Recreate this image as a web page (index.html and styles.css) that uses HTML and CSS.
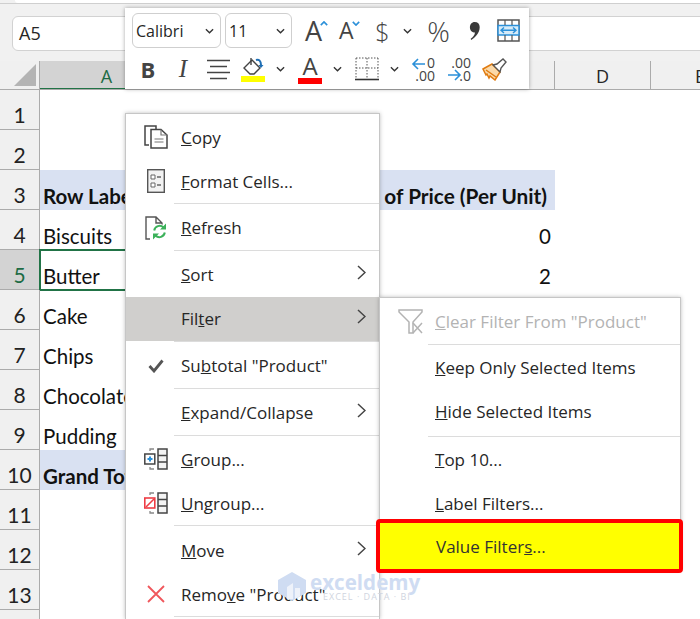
FILE: index.html
```html
<!DOCTYPE html>
<html lang="en">
<head>
    <meta charset="UTF-8">
    <title>Pivot table filter menu</title>
    <link rel="stylesheet" href="styles.css">
</head>
<body>
    <div class="app">
        <div class="top-strip"><div class="top-box"></div></div>
        <div class="formula-row">
            <div class="name-box">A5</div>
            <div class="formula-bar"></div>
        </div>

        <div class="col-headers">
            <div class="corner"><span class="corner-tri"></span></div>
            <div class="col-head col-a">A</div>
            <div class="col-head col-bc"></div>
            <div class="col-head col-d">D</div>
            <div class="col-head col-e">E</div>
        </div>

        <div class="row"><div class="row-num">1</div></div>
        <div class="row"><div class="row-num">2</div></div>
        <div class="row row-total">
            <div class="row-num">3</div>
            <div class="cell col-a bold">Row Labels</div>
            <div class="cell col-bc bold num">Sum of Price (Per Unit)</div>
        </div>
        <div class="row">
            <div class="row-num">4</div>
            <div class="cell col-a">Biscuits</div>
            <div class="cell col-bc num">0</div>
        </div>
        <div class="row">
            <div class="row-num row-num-on">5</div>
            <div class="cell col-a cell-on">Butter</div>
            <div class="cell col-bc num">2</div>
        </div>
        <div class="row"><div class="row-num">6</div><div class="cell col-a">Cake</div></div>
        <div class="row"><div class="row-num">7</div><div class="cell col-a">Chips</div></div>
        <div class="row"><div class="row-num">8</div><div class="cell col-a">Chocolate</div></div>
        <div class="row"><div class="row-num">9</div><div class="cell col-a">Pudding</div></div>
        <div class="row row-total">
            <div class="row-num">10</div>
            <div class="cell col-a bold">Grand Total</div>
            <div class="cell col-bc"></div>
        </div>
        <div class="row"><div class="row-num">11</div></div>
        <div class="row"><div class="row-num">12</div></div>
        <div class="row"><div class="row-num">13</div></div>
        <div class="row row-last"><div class="row-num"></div></div>
    </div>

    <!-- mini toolbar -->
    <div class="mini-bar">
        <div class="bar-row">
            <div class="combo combo-font"><span>Calibri</span><svg class="chev" viewBox="0 0 10 6"><path d="M1 1l4 4 4-4"/></svg></div>
            <div class="combo combo-size"><span>11</span><svg class="chev" viewBox="0 0 10 6"><path d="M1 1l4 4 4-4"/></svg></div>
            <div class="tool t-grow"><span class="big-a">A</span><svg class="caret" viewBox="0 0 10 6"><path d="M1 5l4-4 4 4"/></svg></div>
            <div class="tool t-shrink"><span class="small-a">A</span><svg class="caret caret-down" viewBox="0 0 10 6"><path d="M1 1l4 4 4-4"/></svg></div>
            <div class="tool t-dollar">$</div>
            <div class="tool t-chev"><svg class="chev" viewBox="0 0 10 6"><path d="M1 1l4 4 4-4"/></svg></div>
            <div class="tool t-pct">%</div>
            <div class="tool t-comma"><svg width="12" height="18" viewBox="0 0 13 23"><path d="M6 0c4 0 6.500 2.500 6.500 6.500C12.500 14 7 20 1.500 23L1 21.500c3-2 5-4.500 5.500-8C3 13.500 0 11 0 7c0-4 2.500-7 6-7z" fill="#3a3a3a"/></svg></div>
            <div class="tool t-wrap">
                <svg width="23" height="23" viewBox="0 0 23 23">
                    <rect x="1" y="1" width="21" height="21" fill="#fff" stroke="#555" stroke-width="1.500"/>
                    <rect x="1" y="6.500" width="21" height="9.500" fill="#d6ebf8" stroke="#2b90d9" stroke-width="1.500"/>
                    <path d="M8 1v5M15 1v5M8 16v6M15 16v6" stroke="#555" stroke-width="1.200"/>
                    <path d="M4 11.200h15M7 8.500l-3 2.700 3 2.700M16 8.500l3 2.700-3 2.700" fill="none" stroke="#2b90d9" stroke-width="1.400"/>
                </svg>
            </div>
        </div>
        <div class="bar-row bar-row-2">
            <div class="tool t-bold">B</div>
            <div class="tool t-ital">I</div>
            <div class="tool t-align">
                <svg width="23" height="21" viewBox="0 0 23 21"><path d="M0 1.500h23M3 7.500h17M0 13.500h23M3 19.500h17" stroke="#444" stroke-width="1.500"/></svg>
            </div>
            <div class="tool t-fill">
                <svg width="24" height="25" viewBox="0 0 24 25">
                    <path d="M3 11l8-8 8 8-6 6H9z" fill="#fff" stroke="#444" stroke-width="1.400"/>
                    <path d="M10 1v7" stroke="#444" stroke-width="1.400"/>
                    <path d="M15 3c3-1 5 1 5 5" fill="none" stroke="#1f6fb5" stroke-width="2"/>
                    <path d="M17.500 8h5l-2.500 3z" fill="#1f6fb5"/>
                    <rect y="19" width="24" height="6" fill="#ffff00"/>
                </svg>
            </div>
            <div class="tool t-chev2"><svg class="chev" viewBox="0 0 10 6"><path d="M1 1l4 4 4-4"/></svg></div>
            <div class="tool t-color"><span class="color-a">A</span><span class="color-bar"></span></div>
            <div class="tool t-chev2"><svg class="chev" viewBox="0 0 10 6"><path d="M1 1l4 4 4-4"/></svg></div>
            <div class="tool t-border">
                <svg width="24" height="24" viewBox="0 0 24 24">
                    <path d="M1 1h22M1 1v20M23 1v20M12 1v20M1 11h22" fill="none" stroke="#555" stroke-dasharray="1.500 1.500"/>
                    <path d="M0 22.500h24" stroke="#333" stroke-width="1.600"/>
                </svg>
            </div>
            <div class="tool t-chev2"><svg class="chev" viewBox="0 0 10 6"><path d="M1 1l4 4 4-4"/></svg></div>
            <div class="tool t-dec">
                <svg width="24" height="25" viewBox="0 0 24 25">
                    <path d="M14 7H2M7 2L2 7l5 5" fill="none" stroke="#2b90d9" stroke-width="1.600"/>
                    <text x="24" y="11" text-anchor="end" class="dec-text">0</text>
                    <text x="24" y="24" text-anchor="end" class="dec-text">.00</text>
                </svg>
            </div>
            <div class="tool t-dec">
                <svg width="24" height="25" viewBox="0 0 24 25">
                    <text x="24" y="11" text-anchor="end" class="dec-text">.00</text>
                    <path d="M1 18h12M8 13l5 5-5 5" fill="none" stroke="#2b90d9" stroke-width="1.600"/>
                    <text x="24" y="24" text-anchor="end" class="dec-text">.0</text>
                </svg>
            </div>
            <div class="tool t-brush">
                <svg width="25" height="23" viewBox="0 0 25 23">
                    <path d="M1 11l9-5 8 8-5 8-5-4-1 2-2-4-1 1z" fill="#fbd9a8" stroke="#e07b10" stroke-width="1.500"/>
                    <path d="M4 12l10 7" stroke="#e07b10" stroke-width="1.500"/>
                    <path d="M11 7l4-1 6-5 3 3-5 6-1 4z" fill="#fff" stroke="#555" stroke-width="1.400"/>
                </svg>
            </div>
        </div>
    </div>

    <!-- context menu -->
    <div class="menu">
        <div class="item">
            <span class="icon">
                <svg width="24" height="24" viewBox="0 0 24 24">
                    <path d="M5 20H1V1h11v3" fill="none" stroke="#444" stroke-width="1.500"/>
                    <path d="M7 4.500h10l6 5.500v13H7z" fill="#fff" stroke="#444" stroke-width="1.500"/>
                    <path d="M17 4.500V10h6M10.500 14h9M10.500 17h9" fill="none" stroke="#777" stroke-width="1.200"/>
                </svg>
            </span>
            <span class="label"><u>C</u>opy</span>
        </div>
        <div class="item">
            <span class="icon">
                <svg width="18" height="24" viewBox="0 0 18 24">
                    <rect x="0.700" y="0.700" width="16.600" height="22.600" fill="#f2f2f2" stroke="#555" stroke-width="1.400"/>
                    <path d="M4 6h4v4H4zM4 14h4v4H4z" fill="#fff" stroke="#666"/>
                    <path d="M10 8h4M10 16h4" stroke="#666" stroke-width="1.300"/>
                </svg>
            </span>
            <span class="label"><u>F</u>ormat Cells...</span>
        </div>
        <div class="sep"></div>
        <div class="item">
            <span class="icon">
                <svg width="22" height="24" viewBox="0 0 22 24">
                    <path d="M5 23H1V1h10l6 6v3M11 1v6h6" fill="none" stroke="#555" stroke-width="1.400"/>
                    <circle cx="14.500" cy="15.500" r="7.500" fill="#fff"/>
                    <path d="M9.200 14.500a5.500 5.500 0 0 1 9.300-3M19.800 16.500a5.500 5.500 0 0 1-9.300 3" fill="none" stroke="#3cb15a" stroke-width="2"/>
                    <path d="M21 7.500v6h-6zM8 23.500v-6h6z" fill="#3cb15a"/>
                </svg>
            </span>
            <span class="label"><u>R</u>efresh</span>
        </div>
        <div class="sep"></div>
        <div class="item">
            <span class="icon"></span>
            <span class="label"><u>S</u>ort</span>
            <svg class="more" viewBox="0 0 9 15"><path d="M1 1l7 6.500L1 14"/></svg>
        </div>
        <div class="item item-on">
            <span class="icon"></span>
            <span class="label">Fil<u>t</u>er</span>
            <svg class="more" viewBox="0 0 9 15"><path d="M1 1l7 6.500L1 14"/></svg>
        </div>
        <div class="sep"></div>
        <div class="item">
            <span class="icon">
                <svg width="16" height="14" viewBox="0 0 16 14"><path d="M1.500 7l4.500 5L14.500 1.500" fill="none" stroke="#555" stroke-width="2.800"/></svg>
            </span>
            <span class="label">Su<u>b</u>total "Product"</span>
        </div>
        <div class="sep"></div>
        <div class="item">
            <span class="icon"></span>
            <span class="label"><u>E</u>xpand/Collapse</span>
            <svg class="more" viewBox="0 0 9 15"><path d="M1 1l7 6.500L1 14"/></svg>
        </div>
        <div class="sep"></div>
        <div class="item">
            <span class="icon">
                <svg width="24" height="22" viewBox="0 0 24 22">
                    <rect x="0.800" y="6" width="10" height="10" fill="#fff" stroke="#444" stroke-width="1.500"/>
                    <path d="M3.500 11h5M6 8.500v5" stroke="#2b90d9" stroke-width="2"/>
                    <path d="M6 3V1h4M6 19v2h4" fill="none" stroke="#888" stroke-width="1.300"/>
                    <rect x="14" y="1" width="9" height="20" fill="#f4f4f4" stroke="#444" stroke-width="1.500"/>
                    <path d="M14 7.500h9M14 14h9" stroke="#444" stroke-width="1.300"/>
                </svg>
            </span>
            <span class="label"><u>G</u>roup...</span>
        </div>
        <div class="item">
            <span class="icon">
                <svg width="24" height="22" viewBox="0 0 24 22">
                    <rect x="0.800" y="6" width="10" height="10" fill="#fff" stroke="#ee3d45" stroke-width="1.600"/>
                    <path d="M2 15l8-8" stroke="#ee3d45" stroke-width="1.600"/>
                    <path d="M6 3V1h4M6 19v2h4" fill="none" stroke="#888" stroke-width="1.300"/>
                    <rect x="14" y="1" width="9" height="20" fill="#f4f4f4" stroke="#444" stroke-width="1.500"/>
                    <path d="M14 7.500h9M14 14h9" stroke="#444" stroke-width="1.300"/>
                </svg>
            </span>
            <span class="label"><u>U</u>ngroup...</span>
        </div>
        <div class="sep"></div>
        <div class="item">
            <span class="icon"></span>
            <span class="label"><u>M</u>ove</span>
            <svg class="more" viewBox="0 0 9 15"><path d="M1 1l7 6.500L1 14"/></svg>
        </div>
        <div class="item">
            <span class="icon">
                <svg width="18" height="18" viewBox="0 0 18 18"><path d="M1 1l16 16M17 1L1 17" stroke="#f0565b" stroke-width="1.800"/></svg>
            </span>
            <span class="label">Remo<u>v</u>e "Product"</span>
        </div>
        <div class="sep"></div>
    </div>

    <!-- filter submenu -->
    <div class="submenu">
        <div class="item sub-item disabled">
            <span class="icon">
                <svg width="25" height="25" viewBox="0 0 25 25">
                    <path d="M1 1h23v2l-9 10v11h-4V13L1 3z" fill="#fff" stroke="#b3b3b3" stroke-width="1.500"/>
                    <path d="M15 14l9 10M24 14l-9 10" stroke="#b3b3b3" stroke-width="1.500"/>
                </svg>
            </span>
            <span class="label"><u>C</u>lear Filter From "Product"</span>
        </div>
        <div class="sep sub-sep"></div>
        <div class="item sub-item"><span class="icon"></span><span class="label"><u>K</u>eep Only Selected Items</span></div>
        <div class="item sub-item"><span class="icon"></span><span class="label"><u>H</u>ide Selected Items</span></div>
        <div class="sep sub-sep"></div>
        <div class="item sub-item"><span class="icon"></span><span class="label"><u>T</u>op 10...</span></div>
        <div class="item sub-item"><span class="icon"></span><span class="label"><u>L</u>abel Filters...</span></div>
        <div class="item sub-item item-mark"><span class="icon"></span><span class="label">Value Filter<u>s</u>...</span></div>
    </div>

    <!-- site mark -->
    <div class="mark">
        <svg width="28" height="29" viewBox="0 0 28 29"><path d="M14 0l14 8v13l-14 8-14-8V8z" fill="#cfdcf2"/><path d="M9 27V15l6-4v16zM17 27V16h5v8z" fill="#eef2fa"/></svg>
        <div class="mark-text">
            <div class="mark-name">exceldemy</div>
            <div class="mark-sub">EXCEL · DATA · BI</div>
        </div>
    </div>
</body>
</html>
```

FILE: styles.css
```css
* {
    box-sizing: border-box;
}
html, body {
    margin: 0;
    height: 100%;
    overflow: hidden;
}
body {
    background-color: #f1f1f1;
    font-family: "Open Sans", "Noto Sans", sans-serif;
    color: #262626;
    position: relative;
}
svg {
    display: block;
}

/* formula bar */
.top-strip {
    height: 4px;
    border-bottom: 1px solid #cfcfcf;
    overflow: hidden;
}
.top-box {
    height: 3px;
    margin-left: 15px;
    background-color: #fff;
    border-radius: 0 0 0 6px;
}
.formula-row {
    display: flex;
    margin-top: 12px;
    height: 35px;
    gap: 6px;
}
.name-box {
    width: 124px;
    margin-left: 12px;
    background-color: #fff;
    border: 1px solid #d2d2d2;
    border-radius: 6px;
    padding: 4px 6px;
    font-size: 18px;
    line-height: 24px;
}
.formula-bar {
    flex: 1;
    background-color: #fff;
    border-top: 1px solid #d2d2d2;
    border-bottom: 1px solid #d2d2d2;
}

/* sheet */
.col-headers {
    display: flex;
    margin-top: 10px;
    height: 29px;
    border-bottom: 1px solid #ababab;
    background-color: #f0f0f0;
    overflow: hidden;
}
.corner {
    width: 40px;
    flex-shrink: 0;
    border-right: 1px solid #ababab;
    display: flex;
    align-items: flex-end;
    justify-content: flex-end;
    padding: 0 3px 3px 0;
}
.corner-tri {
    width: 22px;
    height: 22px;
    background-color: #b4b4b4;
    clip-path: polygon(100% 0, 100% 100%, 0 100%);
}
.col-head {
    flex-shrink: 0;
    border-right: 1px solid #ababab;
    font-size: 18px;
    text-align: center;
    line-height: 30px;
}
.col-a {
    width: 134px;
}
.col-head.col-a {
    background-color: #d3d3d3;
    color: #1d6b44;
    border-bottom: 2px solid #217346;
    height: 29px;
}
.col-bc {
    width: 381px;
}
.col-d {
    width: 96px;
}
.col-e {
    width: 96px;
    text-align: left;
    padding-left: 44px;
    border-right: none;
}
.row {
    display: flex;
    height: 40px;
    background-color: #fff;
}
.row-last {
    height: 9px;
}
.row-num {
    width: 40px;
    flex-shrink: 0;
    background-color: #f0f0f0;
    border-right: 1px solid #ababab;
    border-bottom: 1px solid #ababab;
    font-family: Lato, sans-serif;
    font-size: 21px;
    color: #222;
    text-align: center;
    line-height: 50px;
    overflow: hidden;
}
.row-last .row-num {
    border-bottom: none;
}
.row-num-on {
    background-color: #d3d3d3;
    color: #1d6b44;
}
.cell {
    font-family: Lato, "Liberation Sans", sans-serif;
    font-size: 20.500px;
    color: #111;
    line-height: 26px;
    padding: 13px 4px 0 3px;
    white-space: nowrap;
    overflow: hidden;
}
.bold {
    font-weight: 700;
}
.num {
    text-align: right;
}
.cell.bold.num {
    font-size: 20.800px;
    padding-right: 8px;
}
.row-total .cell {
    background-color: #d9e1f2;
}
.row-total .cell:not(.bold) {
    border-top: 1px solid #8ea9db;
}
.row-total:nth-child(5) .cell {
    border-bottom: 1px solid #8ea9db;
}
.cell-on {
    overflow: visible;
    outline: 2px solid #217346;
    outline-offset: -1px;
}

/* mini toolbar */
.mini-bar {
    position: absolute;
    left: 125px;
    top: 8px;
    width: 404px;
    height: 81px;
    background-color: #fff;
    box-shadow: 0 0 4px rgba(0, 0, 0, 0.35);
    padding: 5px 0 0 7px;
}
.bar-row {
    display: flex;
    align-items: center;
    height: 35px;
}
.bar-row-2 {
    margin-top: 5px;
    height: 32px;
}
.combo {
    height: 35px;
    border: 1px solid #cfcfcf;
    border-radius: 6px;
    display: flex;
    align-items: center;
    justify-content: space-between;
    padding: 0 6px 0 3px;
    font-size: 16px;
    margin-right: 4px;
}
.combo-font {
    width: 89px;
}
.combo-size {
    width: 67px;
}
.chev {
    width: 9px;
    height: 6px;
    fill: none;
    stroke: #333;
    stroke-width: 1.500;
}
.tool {
    display: flex;
    align-items: center;
    justify-content: center;
    flex-shrink: 0;
    color: #444;
}
.t-grow {
    width: 37px;
    margin-left: 6px;
    justify-content: flex-start;
    padding-left: 3px;
}
.big-a {
    font-size: 27px;
    line-height: 35px;
}
.small-a {
    font-size: 23px;
    line-height: 35px;
}
.caret {
    width: 8px;
    height: 5px;
    fill: none;
    stroke: #2b90d9;
    stroke-width: 2;
    margin: -14px 0 0 -2px;
}
.t-shrink {
    width: 34px;
    justify-content: flex-start;
}
.t-dollar {
    width: 19px;
    font-size: 25px;
    font-weight: 300;
}
.t-chev {
    width: 31px;
}
.t-pct {
    width: 31px;
    font-size: 28px;
    font-weight: 300;
}
.t-comma {
    width: 41px;
}
.t-wrap {
    width: 27px;
}
.t-bold {
    width: 22px;
    margin-left: 5px;
    font-size: 22px;
    font-weight: 700;
}
.t-ital {
    width: 14px;
    margin-left: 17px;
    font-family: "Liberation Serif", serif;
    font-size: 25px;
    font-style: italic;
}
.t-align {
    width: 23px;
    margin-left: 17px;
}
.t-fill {
    width: 24px;
    margin-left: 11px;
}
.t-chev2 {
    width: 10px;
    margin-left: 10px;
}
.t-color {
    width: 24px;
    margin-left: 13px;
    flex-direction: column;
}
.color-a {
    font-size: 24px;
    line-height: 24px;
}
.color-bar {
    width: 24px;
    height: 6px;
    background-color: #ff0000;
}
.t-border {
    width: 24px;
    margin-left: 13px;
}
.t-dec {
    width: 24px;
    margin-left: 12px;
}
.t-dec svg {
    overflow: visible;
}
.dec-text {
    font-family: "Open Sans", sans-serif;
    font-size: 14px;
    fill: #444;
}
.t-brush {
    width: 25px;
    margin-left: 11px;
}

/* menus */
.menu {
    position: absolute;
    left: 125px;
    top: 113px;
    width: 255px;
    height: 506px;
    background-color: #fff;
    border: 1px solid #c6c6c6;
    border-bottom: none;
    box-shadow: 0 0 4px rgba(0, 0, 0, 0.25);
    padding-top: 1px;
}
.submenu {
    position: absolute;
    left: 379px;
    top: 297px;
    width: 302px;
    height: 273px;
    background-color: #fff;
    border: 1px solid #c6c6c6;
    box-shadow: 0 0 4px rgba(0, 0, 0, 0.25);
}
.item {
    display: flex;
    align-items: center;
    height: 44px;
    font-size: 17px;
    white-space: nowrap;
}
.icon {
    width: 24px;
    margin: 0 13px 0 18px;
    display: flex;
    justify-content: center;
    flex-shrink: 0;
}
.item-on {
    background-color: #d0cfcd;
}
.more {
    width: 9px;
    height: 15px;
    margin: -4px 13px 0 auto;
    fill: none;
    stroke: #444;
    stroke-width: 1.500;
}
.sep {
    height: 2.900px;
    margin-left: 48px;
    border-top: 1px solid #dcdcdc;
}
.sub-sep {
    height: 1.500px;
    margin-top: 2px;
}
.sub-item .icon {
    width: 25px;
    margin: 0 12px 0 18px;
}
.disabled {
    color: #b3b3b3;
    padding-top: 2px;
}
.item-mark {
    position: absolute;
    left: -4px;
    right: -3px;
    bottom: -4px;
    height: 54px;
    padding-left: 1px;
    background-color: #ffff00;
    border: 4px solid #ff0000;
    border-radius: 4px;
    color: #333;
}

/* site mark */
.mark {
    position: absolute;
    left: 278px;
    top: 572px;
    display: flex;
    gap: 4px;
    pointer-events: none;
}
.mark-name {
    font-family: "Open Sans", sans-serif;
    font-size: 20.600px;
    font-weight: 700;
    line-height: 20px;
    color: #cfdcf2;
}
.mark-sub {
    font-family: "Open Sans", sans-serif;
    font-size: 9px;
    line-height: 9px;
    letter-spacing: 1px;
    color: #d0d5e0;
    padding-left: 13px;
}
```
